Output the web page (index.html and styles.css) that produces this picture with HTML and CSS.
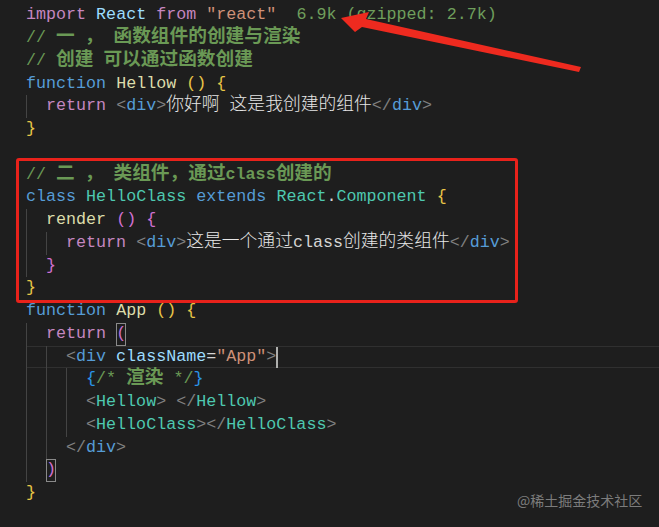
FILE: index.html
```html
<!DOCTYPE html>
<html>
<head>
  <meta charset="utf-8" />
  <title>App.js</title>
  <link rel="stylesheet" href="styles.css">
</head>
<body>
  <div class="editor">
    <div class="line"><span class="ctl">import</span> <span class="var">React</span> <span class="ctl">from</span> <span class="str">"react"</span>  <span class="cost">6.9k (gzipped: 2.7k)</span></div>
    <div class="line cmt">// <span class="zh-c">一</span> <span class="zh-c">，</span> <span class="zh-c">函数组件的创建与渲染</span></div>
    <div class="line cmt">// <span class="zh-c">创建</span> <span class="zh-c">可以通过函数创建</span></div>
    <div class="line"><span class="kw">function</span> <span class="fn">Hellow</span> <span class="b1">()</span> <span class="b1">{</span></div>
    <div class="line"><span class="ind"></span><span class="ctl">return</span> <span class="pn">&lt;</span><span class="tag">div</span><span class="pn">&gt;</span><span class="zh">你好啊</span> <span class="zh">这是我创建的组件</span><span class="pn">&lt;/</span><span class="tag">div</span><span class="pn">&gt;</span></div>
    <div class="line"><span class="b1">}</span></div>
    <div class="line"></div>
    <div class="line cmt">// <span class="zh-c">二</span> <span class="zh-c">，</span> <span class="zh-c">类组件，通过</span><b>class</b><span class="zh-c">创建的</span></div>
    <div class="line"><span class="kw">class</span> <span class="cls">HelloClass</span> <span class="kw">extends</span> <span class="cls">React</span>.<span class="cls">Component</span> <span class="b1">{</span></div>
    <div class="line"><span class="ind"></span><span class="fn">render</span> <span class="b2">()</span> <span class="b2">{</span></div>
    <div class="line"><span class="ind"></span><span class="ind"></span><span class="ctl">return</span> <span class="pn">&lt;</span><span class="tag">div</span><span class="pn">&gt;</span><span class="zh">这是一个通过</span>class<span class="zh">创建的类组件</span><span class="pn">&lt;/</span><span class="tag">div</span><span class="pn">&gt;</span></div>
    <div class="line"><span class="ind"></span><span class="b2">}</span></div>
    <div class="line"><span class="b1">}</span></div>
    <div class="line"><span class="kw">function</span> <span class="fn">App</span> <span class="b1">()</span> <span class="b1">{</span></div>
    <div class="line"><span class="ind"></span><span class="ctl">return</span> <span class="b2 match">(</span></div>
    <div class="line current"><span class="ind"></span><span class="ind"></span><span class="pn">&lt;</span><span class="tag">div</span> <span class="var">className</span>=<span class="str">"App"</span><span class="pn">&gt;</span><span class="cursor"></span></div>
    <div class="line"><span class="ind"></span><span class="ind"></span><span class="ind"></span><span class="b3">{</span><span class="cmt">/* <span class="zh-c">渲染</span> */</span><span class="b3">}</span></div>
    <div class="line"><span class="ind"></span><span class="ind"></span><span class="ind"></span><span class="pn">&lt;</span><span class="cls">Hellow</span><span class="pn">&gt;</span> <span class="pn">&lt;/</span><span class="cls">Hellow</span><span class="pn">&gt;</span></div>
    <div class="line"><span class="ind"></span><span class="ind"></span><span class="ind"></span><span class="pn">&lt;</span><span class="cls">HelloClass</span><span class="pn">&gt;&lt;/</span><span class="cls">HelloClass</span><span class="pn">&gt;</span></div>
    <div class="line"><span class="ind"></span><span class="ind"></span><span class="pn">&lt;/</span><span class="tag">div</span><span class="pn">&gt;</span></div>
    <div class="line"><span class="ind"></span><span class="b2 match">)</span></div>
    <div class="line"><span class="b1">}</span></div>

    <div class="mark-box"></div>
    <svg class="mark-arrow" width="659" height="100" viewBox="0 0 659 100">
      <path d="M341,18 L369,12 L366,19 L581,67 L579,72 L362,27 L355,32 Z" fill="#ee2a1f"/>
    </svg>
    <div class="watermark">@稀土掘金技术社区</div>
  </div>
</body>
</html>
```

FILE: styles.css
```css
html, body {
  margin: 0;
  background: #1e1e1e;
}
.editor {
  position: relative;
  width: 659px;
  height: 527px;
  overflow: hidden;
  box-sizing: border-box;
  padding: 4.4px 0 0 26px;
  background: #1e1e1e;
  color: #d4d4d4;
  font-family: "Liberation Mono", "Noto Sans CJK SC", monospace;
  font-size: 16.7px;
}
.line {
  height: 22.76px;
  line-height: 22.76px;
  white-space: pre;
}
.line.current {
  box-shadow: inset 0 1px #303030, inset 0 -1px #303030;
}
.ind {
  display: inline-block;
  width: 2ch;
  height: 22.76px;
  vertical-align: top;
  border-left: 1px solid #444;
  box-sizing: border-box;
}
.zh {
  font-family: "Noto Sans CJK SC", sans-serif;
  font-size: 17.8px;
  font-weight: 300;
  line-height: 0;
  color: #e6e6e6;
}
.zh-c {
  font-family: "Noto Sans CJK SC", sans-serif;
  font-size: 18.7px;
  font-weight: 700;
  line-height: 0;
}
.cmt { color: #6a9955; }
.cmt b { font-weight: 700; }
.ctl { color: #c586c0; }
.var { color: #9cdcfe; }
.str { color: #ce9178; }
.cost { color: #6f9e5c; }
.kw { color: #569cd6; }
.fn { color: #dcdcaa; }
.cls { color: #4ec9b0; }
.tag { color: #569cd6; }
.pn { color: #808080; }
.b1 { color: #e8c547; }
.b2 { color: #d070d0; }
.b3 { color: #2a94e8; }
.match {
  display: inline-block;
  vertical-align: top;
  box-shadow: inset 0 0 0 1px #8a8a8a;
}
.cursor {
  display: inline-block;
  width: 2px;
  height: 21px;
  margin-top: 1px;
  vertical-align: top;
  background: #aeafad;
}
.mark-box {
  position: absolute;
  left: 16px;
  top: 158px;
  width: 502px;
  height: 145px;
  box-sizing: border-box;
  border: 3px solid #e8221b;
  border-radius: 3px;
}
.mark-arrow {
  position: absolute;
  left: 0;
  top: 0;
}
.watermark {
  position: absolute;
  left: 517px;
  top: 490px;
  font-family: "Noto Sans CJK SC", sans-serif;
  font-size: 14px;
  line-height: 20px;
  color: #7c7c7c;
}
```
